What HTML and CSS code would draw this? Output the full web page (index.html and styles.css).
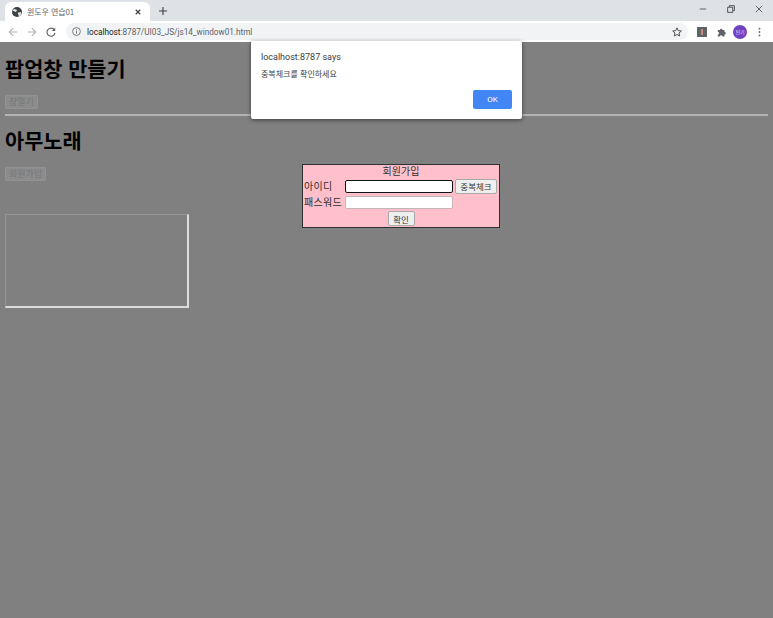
FILE: index.html
```html
<!DOCTYPE html>
<html lang="ko">
<head>
<meta charset="utf-8">
<title>윈도우 연습01</title>
<link rel="stylesheet" href="styles.css">
</head>
<body>
<header class="chrome">
  <div class="tabstrip">
    <div class="tab">
      <svg class="favicon" viewBox="0 0 16 16" width="10" height="10"><circle cx="8" cy="8" r="8" fill="#3c4043"/><path d="M3 3l4 1 1 2-2 2-2-1-3-1zM9 9l4-1 2 1-1 4-3 2-1-3z" fill="#dee1e6"/></svg>
      <span class="tab-title">윈도우 연습01</span>
      <svg class="tab-close" viewBox="0 0 8 8" width="6" height="6"><path d="M1 1l6 6M7 1L1 7" stroke="#3c4043" stroke-width="1.600"/></svg>
    </div>
    <svg class="newtab" viewBox="0 0 10 10" width="8" height="8"><path d="M5 0v10M0 5h10" stroke="#3c4043" stroke-width="1.400"/></svg>
    <div class="winctl">
      <svg viewBox="0 0 10 10" width="8" height="8"><path d="M1 5h8" stroke="#444" stroke-width="1"/></svg>
      <svg viewBox="0 0 10 10" width="8" height="8"><path d="M3 2.500V.8h6.200V7H7.500M.8 2.800h6.400V9.200H.8z" fill="none" stroke="#444" stroke-width="1.100"/></svg>
      <svg viewBox="0 0 10 10" width="8" height="8"><path d="M1 1l8 8M9 1L1 9" stroke="#444" stroke-width="1"/></svg>
    </div>
  </div>
  <div class="toolbar">
    <svg class="nav" viewBox="0 0 12 12" width="10" height="10"><path d="M11 6H1.500M6 1.500L1.500 6 6 10.500" fill="none" stroke="#b4b6b9" stroke-width="1.300"/></svg>
    <svg class="nav" viewBox="0 0 12 12" width="10" height="10"><path d="M1 6h9.500M6 1.500L10.500 6 6 10.500" fill="none" stroke="#b4b6b9" stroke-width="1.300"/></svg>
    <svg class="nav" viewBox="0 0 12 12" width="10" height="10"><path d="M10 3.500A4.800 4.800 0 1 0 10.800 7" fill="none" stroke="#5f6368" stroke-width="1.400"/><path d="M11 .8v4H7z" fill="#5f6368"/></svg>
    <div class="omnibox">
      <svg class="info" viewBox="0 0 12 12" width="9" height="9"><circle cx="6" cy="6" r="5.200" fill="none" stroke="#5f6368" stroke-width="1.100"/><path d="M6 5.200v3.600M6 3v1.200" stroke="#5f6368" stroke-width="1.200"/></svg>
      <span class="url"><span class="host">localhost</span>:8787/UI03_JS/js14_window01.html</span>
      <svg class="star" viewBox="0 0 12 12" width="10" height="10"><path d="M6 1l1.500 3.400 3.700.4-2.800 2.400.8 3.600L6 9l-3.200 1.800.8-3.600L.8 4.800l3.700-.4z" fill="none" stroke="#444" stroke-width="1.100"/></svg>
    </div>
    <div class="ext-box"><span></span></div>
    <svg class="puzzle" viewBox="0 0 12 12" width="10" height="10"><path d="M1 3.500h2.500a1.500 1.500 0 1 1 3 0H9V6a1.500 1.500 0 1 1 0 3v2.500H6.500a1.500 1.500 0 1 0-3 0H1V9a1.500 1.500 0 1 0 0-3z" fill="#5f6368"/></svg>
    <div class="avatar">된기</div>
    <svg class="kebab" viewBox="0 0 4 12" width="3" height="10"><circle cx="2" cy="1.500" r="1.200" fill="#5f6368"/><circle cx="2" cy="6" r="1.200" fill="#5f6368"/><circle cx="2" cy="10.500" r="1.200" fill="#5f6368"/></svg>
  </div>
</header>

<main class="page">
  <h1 class="title first">팝업창 만들기</h1>
  <button class="dim-btn">창열기</button>
  <hr class="rule">
  <h1 class="title second">아무노래</h1>
  <button class="dim-btn">회원가입</button>
  <div class="frame"></div>

  <form class="join">
    <div class="join-title">회원가입</div>
    <div class="join-row">
      <label class="join-label">아이디</label>
      <input class="join-input focused" type="text">
      <button class="form-btn" type="button">중복체크</button>
    </div>
    <div class="join-row">
      <label class="join-label">패스워드</label>
      <input class="join-input" type="text">
    </div>
    <div class="join-submit"><button class="form-btn" type="button">확인</button></div>
  </form>
</main>

<div class="alert">
  <div class="alert-origin">localhost:8787 says</div>
  <div class="alert-msg">중복체크를 확인하세요</div>
  <div class="alert-actions"><button class="ok">OK</button></div>
</div>
</body>
</html>
```
FILE: styles.css
```css
* { box-sizing: border-box; }
html, body { margin: 0; height: 100%; overflow: hidden; }
body {
  display: flex;
  flex-direction: column;
  font-family: "Noto Sans CJK KR", "Noto Sans", sans-serif;
  background: #808080;
}
.chrome { flex: none; }
.tabstrip {
  height: 21px;
  background: #dee1e6;
  display: flex;
  align-items: flex-end;
  padding-left: 5px;
}
.tab {
  width: 145px;
  height: 19px;
  background: #fff;
  border-radius: 6px 6px 0 0;
  display: flex;
  align-items: center;
  padding: 0 9px 0 7px;
  font-size: 8px;
  color: #5f6368;
}
.favicon { flex: none; margin-right: 5px; }
.tab-title { flex: 1; letter-spacing: -.1px; }
.tab-close { flex: none; }
.newtab { margin: 0 0 6px 9px; }
.winctl {
  margin-left: auto;
  align-self: flex-start;
  display: flex;
  gap: 20px;
  padding: 5px 10px 0 0;
}
.toolbar {
  height: 21px;
  background: #fff;
  display: flex;
  align-items: center;
  padding-left: 8px;
}
.nav { flex: none; margin-right: 9px; }
.omnibox {
  width: 622px;
  height: 17px;
  margin-left: 1px;
  border-radius: 9px;
  background: #f1f3f4;
  display: flex;
  align-items: center;
  padding: 0 6px;
}
.info { flex: none; margin-right: 6px; }
.url {
  flex: 1;
  font-family: "Roboto", sans-serif;
  font-size: 8.200px;
  color: #5f6368;
}
.host { color: #202124; }
.ext-box {
  width: 10px;
  height: 10px;
  margin-left: 9px;
  background: #5f6368;
  display: flex;
  justify-content: center;
}
.ext-box span { width: 2px; background: #c98a80; margin: 2px 0; }
.puzzle { margin-left: 10px; }
.avatar {
  width: 14px;
  height: 14px;
  margin-left: 6px;
  border-radius: 50%;
  background: #6f42c1;
  color: #e6dcf5;
  font-size: 5px;
  line-height: 14px;
  text-align: center;
}
.kebab { margin-left: 11px; }

.page {
  position: relative;
  flex: 1;
  padding: 0 5px;
  background: #808080;
  color: #000;
}
.title {
  margin: 0;
  font-size: 20.800px;
  line-height: 30px;
  font-weight: 700;
}
.first { padding-top: 11px; height: 53px; }
.second { padding-top: 9px; height: 51px; }
.dim-btn {
  display: block;
  height: 14px;
  padding: 0 3px;
  border: 1px solid #929292;
  border-radius: 1px;
  background: #8c8c8c;
  color: #777;
  font: 9px/12px "Noto Sans CJK KR", sans-serif;
}
.rule {
  margin: 5px 0 0;
  height: 2px;
  border: 0;
  background: #b3b3b3;
}
.frame {
  width: 184px;
  height: 94px;
  margin-top: 33px;
  border-style: solid;
  border-width: 1px 2px 2px 1px;
  border-color: #959595 #dcdcdc #dcdcdc #959595;
}

.join {
  position: absolute;
  left: 302px;
  top: 122px;
  width: 198px;
  height: 64px;
  border: 1px solid #303030;
  background: #ffc0cb;
  padding: 0 1px;
  font-size: 10px;
  color: #303030;
}
.join-title { text-align: center; height: 13px; line-height: 11px; }
.join-row { display: flex; align-items: center; height: 16px; }
.join-label { width: 41px; flex: none; line-height: 14px; letter-spacing: .3px; }
.join-input {
  width: 108px;
  height: 13px;
  padding: 0;
  border: 1px solid #c3b5b8;
  border-radius: 2px;
  background: #fff;
}
.join-input.focused { border: 1.500px solid #111; height: 13px; }
.form-btn {
  height: 15px;
  margin-left: 2px;
  padding: 0;
  width: 42px;
  white-space: nowrap;
  border: 1px solid #a8a8a8;
  border-radius: 2px;
  background: #efefef;
  color: #333;
  font: 8.500px/12px "Noto Sans CJK KR", sans-serif;
}
.join-submit { display: flex; justify-content: center; padding-top: 1px; }
.join-submit .form-btn { margin: 0; width: 27px; }

.alert {
  position: absolute;
  left: 251px;
  top: 41px;
  width: 271px;
  height: 78px;
  background: #fff;
  border-radius: 2px;
  box-shadow: 0 1px 4px rgba(0, 0, 0, .55);
  padding: 9px 10px 0;
  color: #3c4043;
}
.alert-origin { font: 9px/14px "Roboto", sans-serif; }
.alert-msg { margin-top: 4px; font-size: 8px; line-height: 12px; }
.alert-actions { display: flex; justify-content: flex-end; margin-top: 10px; }
.ok {
  width: 39px;
  height: 19px;
  padding: 0;
  border: 0;
  border-radius: 2px;
  background: #4285f4;
  color: #fff;
  font: 8px/19px "Roboto", sans-serif;
}
```
